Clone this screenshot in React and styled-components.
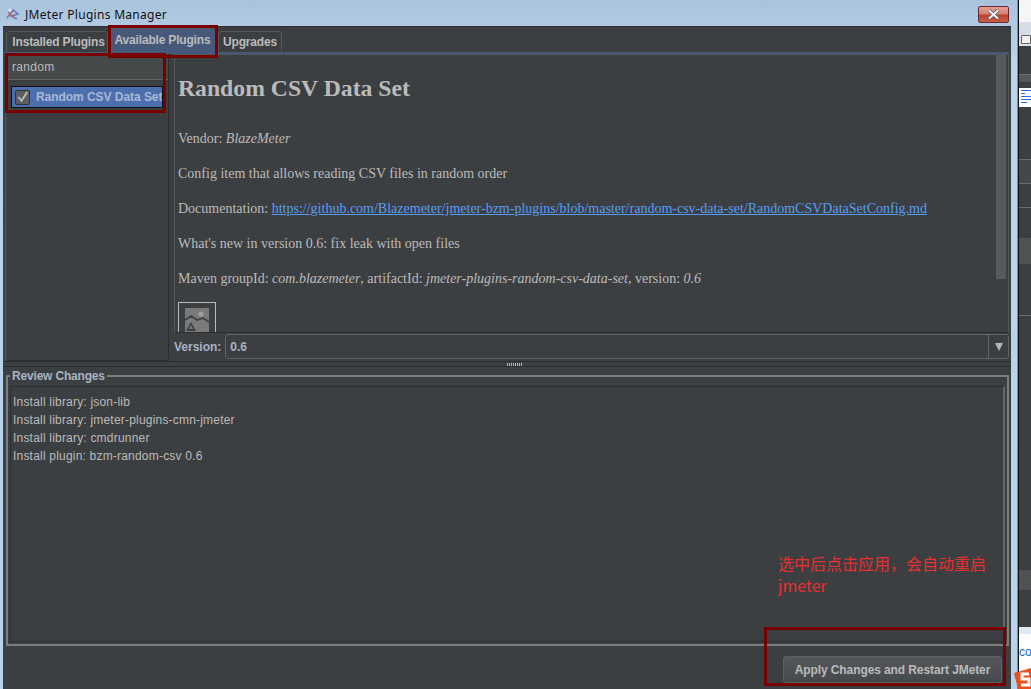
import React from 'react'
import styled, { createGlobalStyle } from 'styled-components'

const Global = createGlobalStyle`
html, body {
  margin: 0;
  padding: 0;
  background: #3c3f41;
}
* { box-sizing: border-box; }
`
const Desktop = styled.div`
position: relative;
display: flex;
width: 1031px;
height: 689px;
overflow: hidden;
font-family: "Liberation Sans", Arial, sans-serif;
`
const Win = styled.div`
display: flex;
flex-direction: column;
width: 1018px;
height: 689px;
flex-shrink: 0;
padding: 0 6px 0 3px;
background: linear-gradient(180deg, #a9c3dc 0, #bcd3ea 60px, #b9d1ea 100%);
border-right: 1px solid #39a9d8;
`
const TitleBar = styled.div`
display: flex;
align-items: center;
height: 26px;
flex-shrink: 0;
gap: 4px;
padding: 2px 0 0 2px;
position: relative;
`
const Title = styled.div`
font-family: "Noto Sans", sans-serif;
font-size: 12px;
letter-spacing: 0.3px;
color: #111;
`
const CloseBtn = styled.div`
position: absolute;
right: 2px;
top: 6px;
width: 31px;
height: 17px;
border: 1px solid #6b2a33;
border-radius: 2px;
background: linear-gradient(180deg, #e4a092 0, #d58373 45%, #b9402c 55%, #c8604c 100%);
display: flex;
align-items: center;
justify-content: center;
`
const Pane = styled.div`
flex: 1;
display: flex;
flex-direction: column;
background: #3c3f41;
border-top: 1px solid #2b2d2f;
min-height: 0;
`
const TabStrip = styled.div`
display: flex;
align-items: flex-end;
height: 25px;
padding-left: 3px;
flex-shrink: 0;
`
const Tab = styled.div`
display: flex;
align-items: center;
justify-content: center;
width: ${p => p.$w}px;
height: ${p => (p.$active ? 24 : 21)}px;
margin-right: ${p => p.$gap || 0}px;
padding: ${p => p.$pad || '0'};
font-size: 12px;
letter-spacing: -0.18px;
font-weight: bold;
color: #bbbbbb;
border: 1px solid #55585a;
border-bottom: none;
border-radius: 4px 4px 0 0;
background: ${p => (p.$active ? '#47597a' : '#3c3f41')};
`
const TabLine = styled.div`
height: 2px;
flex-shrink: 0;
margin: 0 2px 0 1px;
background: #47597a;
`
const TopSplit = styled.div`
display: flex;
height: 307px;
flex-shrink: 0;
padding-left: 2px;
`
const LeftCol = styled.div`
display: flex;
flex-direction: column;
width: 164px;
flex-shrink: 0;
border-right: 1px solid #2b2d2f;
border-left: 1px solid #55585a;
`
const SearchBox = styled.div`
display: flex;
align-items: center;
height: 26px;
padding-left: 6px;
font-size: 12px;
letter-spacing: 0.3px;
color: #bbbbbb;
background: #45494a;
border-bottom: 1px solid #646464;
flex-shrink: 0;
`
const PluginList = styled.div`
flex: 1;
padding: 6px 5px 0 5px;
border-bottom: 1px solid #2b2d2f;
`
const PluginRow = styled.div`
display: flex;
align-items: center;
gap: 6px;
height: 22px;
padding-left: 3px;
background: #4b6eaf;
border: 1px solid #111;
font-size: 12px;
letter-spacing: -0.05px;
font-weight: bold;
white-space: nowrap;
overflow: hidden;
color: #a9b9d6;
`
const CheckBox = styled.div`
width: 15px;
height: 15px;
flex-shrink: 0;
border: 1px solid #333;
border-radius: 2px;
background: #5c5f60;
display: flex;
align-items: center;
justify-content: center;
`
const RightCol = styled.div`
flex: 1;
display: flex;
flex-direction: column;
min-width: 0;
margin: 0 2px 0 5px;
`
const DocPane = styled.div`
position: relative;
height: 279px;
flex-shrink: 0;
overflow: hidden;
padding: 9px 40px 0 3px;
border: 1px solid #55585a;
border-bottom: 1px solid #2b2d2f;
font-family: "Liberation Serif", "Times New Roman", serif;
font-size: 14px;
color: #bbbbbb;
`
const DocTitle = styled.h1`
margin: 8px 0 27px;
font-size: 23.7px;
line-height: 32px;
font-weight: bold;
`
const DocLine = styled.p`
margin: 0 0 19px;
line-height: 16px;
white-space: nowrap;
`
const DocLink = styled.span`
color: #589df6;
text-decoration: underline;
`
const Thumb = styled.div`
width: 38px;
height: 40px;
margin-top: -4px;
border: 1px solid #bbbbbb;
display: flex;
justify-content: center;
padding-top: 5px;
`
const ScrollBar = styled.div`
position: absolute;
right: 2px;
top: 0;
width: 10px;
height: 224px;
background: #57595a;
`
const VersionRow = styled.div`
display: flex;
align-items: center;
flex: 1;
padding: 0 0 1px 0;
gap: 4px;
`
const VersionLabel = styled.span`
font-size: 12px;
font-weight: bold;
color: #a7b3c4;
`
const Combo = styled.div`
flex: 1;
display: flex;
align-items: center;
justify-content: space-between;
height: 25px;
padding-left: 4px;
border: 1px solid #626466;
border-radius: 3px;
font-size: 12px;
font-weight: bold;
color: #a7b3c4;
`
const ComboArrow = styled.div`
display: flex;
align-items: center;
justify-content: center;
width: 20px;
height: 100%;
border-left: 1px solid #626466;
`
const Splitter = styled.div`
display: flex;
align-items: center;
justify-content: center;
height: 6px;
flex-shrink: 0;
padding-left: 16px;
border-top: 1px solid #2b2d2f;
border-bottom: 1px solid #2b2d2f;
`
const Grip = styled.div`
width: 16px;
height: 3px;
background: repeating-linear-gradient(90deg, #b5b5b5 0 1px, #3c3f41 1px 2px);
`
const Review = styled.fieldset`
flex: 1;
min-height: 0;
margin: 2px 2px 0 3px;
padding: 3px 2px 2px 2px;
border: 2px solid #7b7d7e;
display: flex;
flex-direction: column;
`
const ReviewLegend = styled.legend`
margin-left: 0;
padding: 0 2px;
font-size: 12px;
letter-spacing: -0.18px;
font-weight: bold;
line-height: 14px;
color: #a7b3c4;
`
const ChangeLog = styled.div`
height: 100%;
padding: 6px 4px 0 2px;
border: 1px solid #2b2d2f;
border-right: 2px solid #626466;
font-size: 12px;
line-height: 18px;
letter-spacing: 0.2px;
color: #bbbbbb;
`
const Footer = styled.div`
display: flex;
justify-content: flex-end;
align-items: center;
height: 43px;
flex-shrink: 0;
padding: 8px 9px 4px 0;
`
const ApplyBtn = styled.div`
display: flex;
align-items: center;
justify-content: center;
width: 219px;
height: 27px;
border: 1px solid #5e6060;
border-radius: 3px;
background: linear-gradient(180deg, #55585a, #46494b);
font-size: 12px;
letter-spacing: -0.1px;
font-weight: bold;
color: #bbbbbb;
`
const Strip = styled.div`
flex: 1;
display: flex;
flex-direction: column;
background: #3c3f41;
border-left: 1px solid #111;
`
const StripBand = styled.div`
height: ${p => p.$h}px;
flex-shrink: 0;
background: ${p => p.$bg || '#3c3f41'};
border-bottom: ${p => (p.$line ? '1px solid #6a6c6d' : 'none')};
`
const StripIcon = styled.div`
height: 24px;
flex-shrink: 0;
background: #d6dde6;
padding: 13px 0 0 2px;
`
const MiniBtn = styled.div`
width: 10px;
height: 9px;
border: 1px solid #666;
border-radius: 1px;
background: #eee;
`
const StripDoc = styled.div`
display: flex;
flex-direction: column;
gap: 2px;
height: 19px;
flex-shrink: 0;
padding: 2px 0 0 2px;
background: #fff;
`
const DocBar = styled.div`
height: 1px;
width: ${p => p.$w}px;
background: #2a6cf0;
`
const StripPage = styled.div`
flex: 1;
background: #fff;
border-top: 7px solid #dfe8f2;
overflow: hidden;
font-size: 12px;
color: #1166cc;
padding-top: 11px;
white-space: nowrap;
`
const Logo = styled.svg`
position: absolute;
left: 1014px;
top: 668px;
`
const Mark = styled.div`
position: absolute;
left: ${p => p.$x}px;
top: ${p => p.$y}px;
width: ${p => p.$w}px;
height: ${p => p.$h}px;
border: 3px solid #7a0000;
pointer-events: none;
`
const Note = styled.div`
position: absolute;
left: 778px;
top: 552px;
width: 215px;
font-family: "Noto Sans CJK SC", "Liberation Sans", sans-serif;
font-size: 16px;
line-height: 22px;
color: #e8302f;
`

function AppIcon() {
  return (
    <svg width="16" height="16" viewBox="0 0 16 16">
      <path d="M2 12 L8 4 L13 8 L6 10 L12 13" fill="none" stroke="#6f78b8" strokeWidth="1.6" />
      <path d="M3 6 L9 12" stroke="#d8603c" strokeWidth="1.4" />
      <circle cx="5" cy="4" r="1.5" fill="#e9eef6" />
    </svg>
  )
}

function CloseGlyph() {
  return (
    <svg width="13" height="11" viewBox="0 0 13 11">
      <path d="M2 1.5 L11 9.5 M11 1.5 L2 9.5" stroke="#50535a" strokeWidth="3.6" />
      <path d="M2 1.5 L11 9.5 M11 1.5 L2 9.5" stroke="#f2f2f2" strokeWidth="2.2" />
    </svg>
  )
}

function CheckGlyph() {
  return (
    <svg width="14" height="14" viewBox="0 0 14 14">
      <path d="M2.5 7 L6 11 L12 1.5" fill="none" stroke="#bdbdbd" strokeWidth="2" />
    </svg>
  )
}

function BrokenImage() {
  return (
    <svg width="24" height="24" viewBox="0 0 24 24">
      <rect width="24" height="24" fill="#7a7a7a" />
      <circle cx="16" cy="6" r="2.6" fill="#a0a0a0" />
      <path d="M0 12 L6 8 L12 12 L18 10 L24 14" fill="none" stroke="#3c3f41" strokeWidth="1.6" />
      <path d="M6 14 L11 23 L1 23 Z" fill="#3c3f41" />
      <path d="M6 17 L8 21 L4 21 Z" fill="#7a7a7a" />
    </svg>
  )
}

const changes = [
  'Install library: json-lib',
  'Install library: jmeter-plugins-cmn-jmeter',
  'Install library: cmdrunner',
  'Install plugin: bzm-random-csv 0.6',
]

export default function App() {
  return (
    <Desktop>
      <Global />
      <Win>
        <TitleBar>
          <AppIcon />
          <Title>JMeter Plugins Manager</Title>
          <CloseBtn><CloseGlyph /></CloseBtn>
        </TitleBar>
        <Pane>
          <TabStrip>
            <Tab $w={102} $pad="0 0 0 3px">Installed Plugins</Tab>
            <Tab $w={108} $active $gap={2} $pad="0 0 2px 1px">Available Plugins</Tab>
            <Tab $w={64}>Upgrades</Tab>
          </TabStrip>
          <TabLine />
          <TopSplit>
            <LeftCol>
              <SearchBox>random</SearchBox>
              <PluginList>
                <PluginRow>
                  <CheckBox><CheckGlyph /></CheckBox>
                  Random CSV Data Set
                </PluginRow>
              </PluginList>
            </LeftCol>
            <RightCol>
              <DocPane>
                <DocTitle>Random CSV Data Set</DocTitle>
                <DocLine>Vendor: <i>BlazeMeter</i></DocLine>
                <DocLine>Config item that allows reading CSV files in random order</DocLine>
                <DocLine>Documentation: <DocLink>https://github.com/Blazemeter/jmeter-bzm-plugins/blob/master/random-csv-data-set/RandomCSVDataSetConfig.md</DocLink></DocLine>
                <DocLine>What's new in version 0.6: fix leak with open files</DocLine>
                <DocLine>Maven groupId: <i>com.blazemeter</i>, artifactId: <i>jmeter-plugins-random-csv-data-set</i>, version: <i>0.6</i></DocLine>
                <Thumb><BrokenImage /></Thumb>
                <ScrollBar />
              </DocPane>
              <VersionRow>
                <VersionLabel>Version:</VersionLabel>
                <Combo>
                  0.6
                  <ComboArrow>
                    <svg width="10" height="10" viewBox="0 0 10 10"><path d="M1 1 H9 L5 9 Z" fill="#b5b5b5" /></svg>
                  </ComboArrow>
                </Combo>
              </VersionRow>
            </RightCol>
          </TopSplit>
          <Splitter><Grip /></Splitter>
          <Review>
            <ReviewLegend>Review Changes</ReviewLegend>
            <ChangeLog>
              {changes.map(line => <div key={line}>{line}</div>)}
            </ChangeLog>
          </Review>
          <Footer>
            <ApplyBtn>Apply Changes and Restart JMeter</ApplyBtn>
          </Footer>
        </Pane>
      </Win>
      <Strip>
        <StripBand $h={22} $bg="#f4f5f7" />
        <StripIcon><MiniBtn /></StripIcon>
        <StripBand $h={29} $line />
        <StripBand $h={7} $bg="#55585a" />
        <StripBand $h={6} />
        <StripDoc>
          <DocBar $w={12} />
          <DocBar $w={4} />
          <DocBar $w={12} />
          <DocBar $w={12} />
          <DocBar $w={6} />
        </StripDoc>
        <StripBand $h={53} $line />
        <StripBand $h={24} $bg="#45484a" $line />
        <StripBand $h={24} $line />
        <StripBand $h={30} />
        <StripBand $h={26} $bg="#505354" />
        <StripBand $h={52} $line />
        <StripBand $h={254} />
        <StripBand $h={20} $bg="#505354" />
        <StripBand $h={37} />
        <StripPage>cor</StripPage>
      </Strip>
      <Logo width="17" height="21" viewBox="0 0 17 21">
        <path d="M0 5 L17 0 V21 H4 Z" fill="#e8501e" />
        <path d="M15 6 H8 V11 H15 V17 H7" fill="none" stroke="#fff" strokeWidth="3" />
      </Logo>
      <Mark $x={108} $y={25} $w={110} $h={33} />
      <Mark $x={5} $y={53} $w={161} $h={60} />
      <Mark $x={764} $y={627} $w={242} $h={59} />
      <Note>选中后点击应用，会自动重启jmeter</Note>
    </Desktop>
  )
}
